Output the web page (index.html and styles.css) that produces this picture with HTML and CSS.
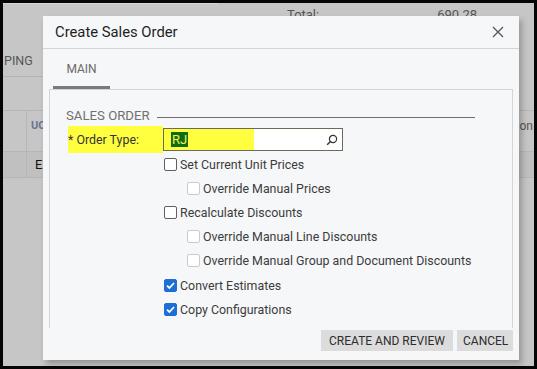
FILE: index.html
```html
<html><head><title>Create Sales Order</title>
<link rel="stylesheet" href="styles.css">
</head>
<body>
<div id="screen">
  <div id="page">
    <div class="page-top">
      <div class="top-rule"></div>
      <div class="totals"><span>Total:</span><span>690.28</span></div>
    </div>
    <div class="page-tabs"><span class="page-tab">PING</span></div>
    <div class="grid-head">
      <div class="cell narrow"></div>
      <div class="cell col-uom">UOM</div>
      <div class="cell fill"></div>
      <div class="cell col-desc">Description</div>
    </div>
    <div class="grid-row">
      <div class="cell narrow"></div>
      <div class="cell col-uom dark">EA</div>
      <div class="cell fill"></div>
      <div class="cell col-desc"></div>
    </div>

    <div id="dialog">
      <div class="dlg-header">
        <span class="dlg-title">Create Sales Order</span>
        <svg class="dlg-close" width="12" height="12" viewBox="0 0 12 12"><path d="M1 1 L11 11 M11 1 L1 11" stroke="#555" stroke-width="1.3"/></svg>
      </div>
      <div class="dlg-tabs">
        <span class="dlg-tab active">MAIN</span>
      </div>
      <div class="dlg-panel">
        <div class="group-title"><span>SALES ORDER</span><span class="group-rule"></span></div>
        <div class="field-row">
          <label class="field-label">* Order Type:</label>
          <div class="selector">
            <span class="sel-text">RJ</span>
            <svg class="sel-icon" width="12" height="12" viewBox="0 0 12 12"><circle cx="7" cy="5" r="3.6" fill="none" stroke="#333" stroke-width="1.2"/><path d="M4.4 7.6 L1.2 10.8" stroke="#333" stroke-width="1.4"/></svg>
          </div>
        </div>
        <div class="checks">
          <label class="check"><span class="box"></span>Set Current Unit Prices</label>
          <label class="check sub"><span class="box off"></span>Override Manual Prices</label>
          <label class="check"><span class="box"></span>Recalculate Discounts</label>
          <label class="check sub"><span class="box off"></span>Override Manual Line Discounts</label>
          <label class="check sub"><span class="box off"></span>Override Manual Group and Document Discounts</label>
          <label class="check"><span class="box on"><svg width="11" height="11" viewBox="0 0 11 11"><path d="M2 5.6 L4.4 8 L9 3" fill="none" stroke="#fff" stroke-width="1.8"/></svg></span>Convert Estimates</label>
          <label class="check"><span class="box on"><svg width="11" height="11" viewBox="0 0 11 11"><path d="M2 5.6 L4.4 8 L9 3" fill="none" stroke="#fff" stroke-width="1.8"/></svg></span>Copy Configurations</label>
        </div>
      </div>
      <div class="dlg-footer">
        <button class="btn">CREATE AND REVIEW</button>
        <button class="btn">CANCEL</button>
      </div>
    </div>
  </div>
</div>
</body>
</html>
```

FILE: styles.css
```css
body, html {
  margin: 0;
  padding: 0;
  width: 100%;
  height: 100%;
  overflow: hidden;
  font-family: Roboto, 'Liberation Sans', sans-serif;
  font-size: 12.4px;
  background-color: #000;
}
#screen {
  width: 537px;
  height: 369px;
  padding: 3px;
  box-sizing: border-box;
  background-color: #050505;
}
#page {
  position: relative;
  width: 100%;
  height: 100%;
  background-color: #c6c6c6;
  overflow: hidden;
  color: #4a4a4a;
}
.page-top {
  height: 14px;
  position: relative;
}
.top-rule {
  width: 215px;
  height: 1px;
  background-color: #d6d6d6;
}
.totals {
  display: flex;
  gap: 118px;
  padding-left: 284px;
  margin-top: 3px;
  font-size: 13px;
  color: #555;
}
.page-tabs {
  height: 60px;
  border-bottom: 1px solid #b3b3b3;
  width: 40px;
  display: flex;
  align-items: flex-end;
  padding-bottom: 8px;
  box-sizing: border-box;
}
.page-tab {
  margin-left: 1px;
  font-size: 12.5px;
  color: #555;
}
.grid-head, .grid-row {
  display: flex;
  border-bottom: 1px solid #b6b6b6;
}
.grid-head {
  margin-top: 33px;
  border-top: 1px solid #b6b6b6;
  height: 40px;
}
.grid-row {
  height: 25px;
  background-color: #c0c0c0;
}
.cell {
  display: flex;
  align-items: center;
}
.narrow {
  width: 23px;
  border-right: 1px solid #b6b6b6;
}
.col-uom {
  width: 60px;
  padding-left: 4px;
  align-items: flex-start;
  padding-top: 8px;
  font-size: 11px;
  font-weight: bold;
  color: #6b7490;
}
.col-uom.dark {
  align-items: center;
  padding-top: 0;
  font-size: 13px;
  font-weight: normal;
  color: #111;
  padding-left: 8px;
}
.fill {
  flex: 1;
}
.col-desc {
  width: 70px;
  justify-content: flex-end;
  align-items: flex-start;
  padding-top: 8px;
  padding-right: 1px;
  font-size: 12px;
  color: #555;
}

#dialog {
  position: absolute;
  left: 40px;
  top: 13px;
  width: 476px;
  height: 344px;
  background-color: #f6f7f9;
  box-shadow: 3px 4px 6px rgba(0, 0, 0, 0.25);
  display: flex;
  flex-direction: column;
}
.dlg-header {
  height: 33px;
  border-bottom: 1px solid #d3d5d8;
  display: flex;
  align-items: center;
  justify-content: space-between;
  padding: 0 15px 0 12px;
  box-sizing: border-box;
}
.dlg-title {
  font-size: 14.8px;
  color: #1f1f1f;
}
.dlg-tabs {
  height: 40px;
  display: flex;
  align-items: stretch;
  padding-left: 10px;
}
.dlg-tab {
  width: 57px;
  display: flex;
  align-items: center;
  justify-content: center;
  padding-top: 2px;
  font-size: 12px;
  color: #6a6a6a;
  box-sizing: border-box;
}
.dlg-tab.active {
  border-bottom: 3px solid #7a7a7a;
}
.dlg-panel {
  margin: 0 6px;
  height: 239px;
  border: 1px solid #d3d5d8;
  border-bottom: none;
  box-sizing: border-box;
  padding: 18px 0 0 16px;
}
.group-title {
  display: flex;
  align-items: center;
  gap: 7px;
  font-size: 13.2px;
  color: #707070;
  height: 14px;
}
.group-rule {
  width: 318px;
  height: 1px;
  background-color: #6e6e6e;
  margin-top: 4px;
}
.field-row {
  display: flex;
  align-items: center;
  margin-top: 4px;
  margin-left: 2px;
  height: 27px;
}
.field-label {
  width: 95px;
  height: 27px;
  display: flex;
  align-items: center;
  background-color: #ffff40;
  color: #333;
}
.selector {
  width: 180px;
  height: 23px;
  box-sizing: border-box;
  border: 1px solid #6b6b5a;
  background: linear-gradient(to right, #ffff40 0, #ffff40 90px, #fff 90px);
  display: flex;
  align-items: center;
  justify-content: space-between;
  padding: 0 4px 0 7px;
}
.sel-text {
  background-color: #0f6d0f;
  color: #f2f25a;
  font-size: 13px;
  line-height: 15px;
  padding: 0 1px;
}
.checks {
  display: flex;
  flex-direction: column;
  padding-left: 98px;
  margin-top: -1px;
}
.check {
  height: 24.2px;
  display: flex;
  align-items: center;
  gap: 3px;
  color: #3c3c3c;
}
.check.sub {
  padding-left: 23px;
}
.box {
  width: 13px;
  height: 13px;
  box-sizing: border-box;
  border: 1px solid #5e5e66;
  border-radius: 2px;
  background-color: #fff;
  display: flex;
  align-items: center;
  justify-content: center;
}
.box.off {
  border-color: #c9cbd0;
}
.box.on {
  border-color: #1d6fd8;
  background-color: #1d6fd8;
}
.dlg-footer {
  display: flex;
  justify-content: flex-end;
  gap: 4px;
  padding: 2px 6px 0 0;
}
.btn {
  height: 21px;
  border: none;
  background-color: #dcdcdc;
  color: #2d2d2d;
  font-family: Roboto, 'Liberation Sans', sans-serif;
  font-size: 12px;
  padding: 0 6px;
}
.btn:first-child {
  width: 132px;
}
.btn:last-child {
  width: 56px;
}
```
